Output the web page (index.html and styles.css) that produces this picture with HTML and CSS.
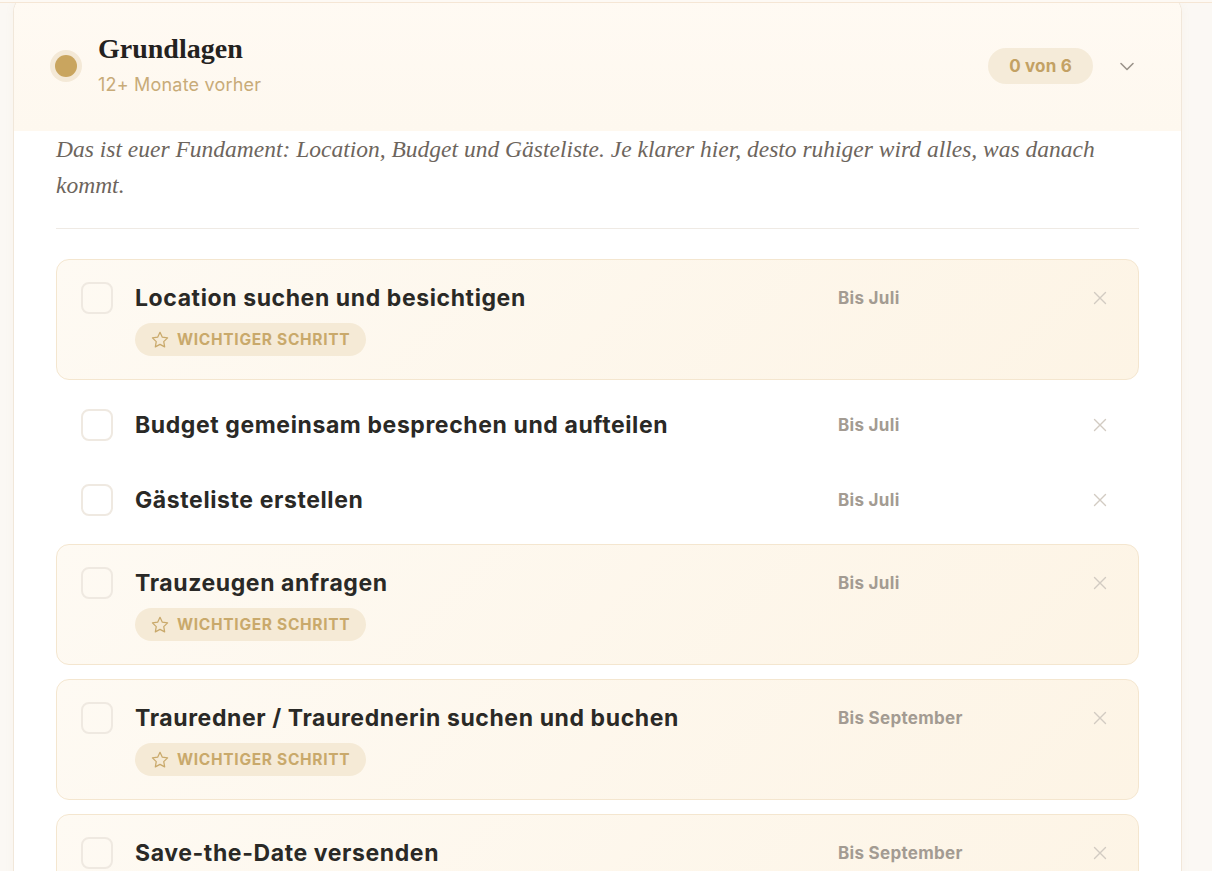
FILE: index.html
```html
<!DOCTYPE html>
<html lang="de">
<head>
    <meta charset="UTF-8">
    <meta name="viewport" content="width=device-width, initial-scale=1.0">
    <title>Checkliste | Grundlagen</title>
    <link rel="stylesheet" href="styles.css">
</head>
<body>
    <div class="topline"></div>
    <main class="page">
        <section class="phase">
            <header class="phase-head">
                <span class="dot"></span>
                <div class="phase-title">
                    <h2>Grundlagen</h2>
                    <p>12+ Monate vorher</p>
                </div>
                <span class="count">0 von 6</span>
                <button class="toggle" type="button" aria-label="Zuklappen">
                    <svg width="18" height="18" viewBox="0 0 18 18" fill="none" stroke="currentColor" stroke-width="1.6" stroke-linecap="round" stroke-linejoin="round"><path d="M3 6.5l6 6 6-6"/></svg>
                </button>
            </header>

            <div class="phase-body">
                <p class="intro">Das ist euer Fundament: Location, Budget und Gästeliste. Je klarer hier, desto ruhiger wird alles, was danach kommt.</p>

                <ul class="tasks">
                    <li class="task key">
                        <span class="check"></span>
                        <div class="task-main">
                            <span class="task-title">Location suchen und besichtigen</span>
                            <span class="tag">
                                <svg width="20" height="20" viewBox="0 0 24 24" fill="none" stroke="currentColor" stroke-width="1.5" stroke-linejoin="round"><path d="M12 2.8l2.8 5.8 6.3.9-4.6 4.4 1.1 6.3L12 17.2l-5.6 3 1.1-6.3-4.6-4.4 6.3-.9z"/></svg>
                                Wichtiger Schritt
                            </span>
                        </div>
                        <span class="due">Bis Juli</span>
                        <button class="remove" type="button" aria-label="Entfernen">
                            <svg width="14" height="14" viewBox="0 0 14 14" stroke="currentColor" stroke-width="1.4" stroke-linecap="round"><path d="M1.5 1.5l11 11M12.5 1.5l-11 11"/></svg>
                        </button>
                    </li>
                    <li class="task">
                        <span class="check"></span>
                        <div class="task-main">
                            <span class="task-title">Budget gemeinsam besprechen und aufteilen</span>
                        </div>
                        <span class="due">Bis Juli</span>
                        <button class="remove" type="button" aria-label="Entfernen">
                            <svg width="14" height="14" viewBox="0 0 14 14" stroke="currentColor" stroke-width="1.4" stroke-linecap="round"><path d="M1.5 1.5l11 11M12.5 1.5l-11 11"/></svg>
                        </button>
                    </li>
                    <li class="task">
                        <span class="check"></span>
                        <div class="task-main">
                            <span class="task-title">Gästeliste erstellen</span>
                        </div>
                        <span class="due">Bis Juli</span>
                        <button class="remove" type="button" aria-label="Entfernen">
                            <svg width="14" height="14" viewBox="0 0 14 14" stroke="currentColor" stroke-width="1.4" stroke-linecap="round"><path d="M1.5 1.5l11 11M12.5 1.5l-11 11"/></svg>
                        </button>
                    </li>
                    <li class="task key">
                        <span class="check"></span>
                        <div class="task-main">
                            <span class="task-title">Trauzeugen anfragen</span>
                            <span class="tag">
                                <svg width="20" height="20" viewBox="0 0 24 24" fill="none" stroke="currentColor" stroke-width="1.5" stroke-linejoin="round"><path d="M12 2.8l2.8 5.8 6.3.9-4.6 4.4 1.1 6.3L12 17.2l-5.6 3 1.1-6.3-4.6-4.4 6.3-.9z"/></svg>
                                Wichtiger Schritt
                            </span>
                        </div>
                        <span class="due">Bis Juli</span>
                        <button class="remove" type="button" aria-label="Entfernen">
                            <svg width="14" height="14" viewBox="0 0 14 14" stroke="currentColor" stroke-width="1.4" stroke-linecap="round"><path d="M1.5 1.5l11 11M12.5 1.5l-11 11"/></svg>
                        </button>
                    </li>
                    <li class="task key">
                        <span class="check"></span>
                        <div class="task-main">
                            <span class="task-title">Trauredner / Traurednerin suchen und buchen</span>
                            <span class="tag">
                                <svg width="20" height="20" viewBox="0 0 24 24" fill="none" stroke="currentColor" stroke-width="1.5" stroke-linejoin="round"><path d="M12 2.8l2.8 5.8 6.3.9-4.6 4.4 1.1 6.3L12 17.2l-5.6 3 1.1-6.3-4.6-4.4 6.3-.9z"/></svg>
                                Wichtiger Schritt
                            </span>
                        </div>
                        <span class="due">Bis September</span>
                        <button class="remove" type="button" aria-label="Entfernen">
                            <svg width="14" height="14" viewBox="0 0 14 14" stroke="currentColor" stroke-width="1.4" stroke-linecap="round"><path d="M1.5 1.5l11 11M12.5 1.5l-11 11"/></svg>
                        </button>
                    </li>
                    <li class="task key">
                        <span class="check"></span>
                        <div class="task-main">
                            <span class="task-title">Save-the-Date versenden</span>
                            <span class="tag">
                                <svg width="20" height="20" viewBox="0 0 24 24" fill="none" stroke="currentColor" stroke-width="1.5" stroke-linejoin="round"><path d="M12 2.8l2.8 5.8 6.3.9-4.6 4.4 1.1 6.3L12 17.2l-5.6 3 1.1-6.3-4.6-4.4 6.3-.9z"/></svg>
                                Wichtiger Schritt
                            </span>
                        </div>
                        <span class="due">Bis September</span>
                        <button class="remove" type="button" aria-label="Entfernen">
                            <svg width="14" height="14" viewBox="0 0 14 14" stroke="currentColor" stroke-width="1.4" stroke-linecap="round"><path d="M1.5 1.5l11 11M12.5 1.5l-11 11"/></svg>
                        </button>
                    </li>
                </ul>
            </div>
        </section>
    </main>
</body>
</html>
```

FILE: styles.css
```css
body {
    margin: 0;
    background-color: #fbf8f4;
    font-family: Inter, 'Noto Sans', sans-serif;
    color: #2b2a28;
    overflow: hidden;
}
.topline {
    position: relative;
    z-index: 1;
    height: 2px;
    background-color: #fdf9f4;
    border-bottom: 1px solid #f5e6d5;
}
.page {
    padding: 0 30px 0 13px;
}
.phase {
    margin-top: -9px;
    background-color: #ffffff;
    border: 1px solid #f1e7da;
    border-radius: 18px;
    box-shadow: 0 2px 10px rgba(190, 160, 110, 0.06);
    overflow: hidden;
}
.phase-head {
    display: flex;
    align-items: center;
    height: 136px;
    padding: 6px 42px 0 41px;
    box-sizing: border-box;
    background: linear-gradient(180deg, #fffaf3 0%, #fef8ef 100%);
}
.dot {
    width: 22px;
    height: 22px;
    border-radius: 50%;
    background-color: #c9a55f;
    box-shadow: 0 0 0 5px #f4e9d7;
    flex-shrink: 0;
}
.phase-title {
    flex: 1;
    margin-left: 21px;
    margin-top: -6px;
}
.phase-title h2 {
    margin: 0;
    font-family: 'Liberation Serif', serif;
    font-weight: 700;
    font-size: 28px;
    line-height: 34px;
    color: #24221f;
}
.phase-title p {
    margin: 8px 0 0;
    font-size: 18px;
    letter-spacing: 0.2px;
    color: #c8ab78;
}
.count {
    padding: 0 21px;
    height: 36px;
    line-height: 36px;
    border-radius: 18px;
    background-color: #f5ebd9;
    color: #c3a164;
    font-weight: 700;
    font-size: 17px;
    letter-spacing: 0.2px;
}
.toggle {
    width: 24px;
    height: 24px;
    margin-left: 22px;
    padding: 0;
    border: none;
    background: none;
    color: #9b938a;
    display: flex;
    align-items: center;
    justify-content: center;
}
.phase-body {
    padding: 0 42px 40px;
}
.intro {
    margin: 0;
    padding-bottom: 25px;
    border-bottom: 1px solid #efeae4;
    font-family: 'Liberation Serif', serif;
    font-style: italic;
    font-size: 23.5px;
    line-height: 36px;
    color: #6d655d;
}
.tasks {
    list-style: none;
    margin: 30px 0 0;
    padding: 0;
    display: flex;
    flex-direction: column;
    gap: 14px;
}
.task {
    display: grid;
    grid-template-columns: 32px 1fr 226px 28px;
    column-gap: 22px;
    align-items: start;
    padding: 14px 24px 13px;
    border: 1px solid transparent;
    border-radius: 13px;
}
.task.key {
    padding: 22px 24px 23px;
    border-color: #f4e6cf;
    background: linear-gradient(135deg, #fefaf3 0%, #fdf4e5 100%);
}
.check {
    width: 28px;
    height: 28px;
    border: 2px solid #efe9e1;
    border-radius: 8px;
}
.task-main {
    display: flex;
    flex-direction: column;
    align-items: flex-start;
    gap: 9px;
}
.task-title {
    font-size: 23px;
    font-weight: 700;
    line-height: 32px;
    letter-spacing: 0.6px;
    color: #2a2926;
}
.tag {
    display: inline-flex;
    align-items: center;
    gap: 7px;
    height: 33px;
    padding: 0 16px 0 15px;
    border-radius: 17px;
    background-color: #f5ead6;
    color: #c9a96b;
    font-size: 15.5px;
    font-weight: 700;
    text-transform: uppercase;
    letter-spacing: 0.7px;
}
.due {
    font-size: 17px;
    font-weight: 700;
    line-height: 32px;
    letter-spacing: 0.3px;
    color: #a39b92;
}
.remove {
    width: 28px;
    height: 32px;
    padding: 0;
    border: none;
    background: none;
    color: #d2cbc2;
    display: flex;
    align-items: center;
    justify-content: center;
}
```
